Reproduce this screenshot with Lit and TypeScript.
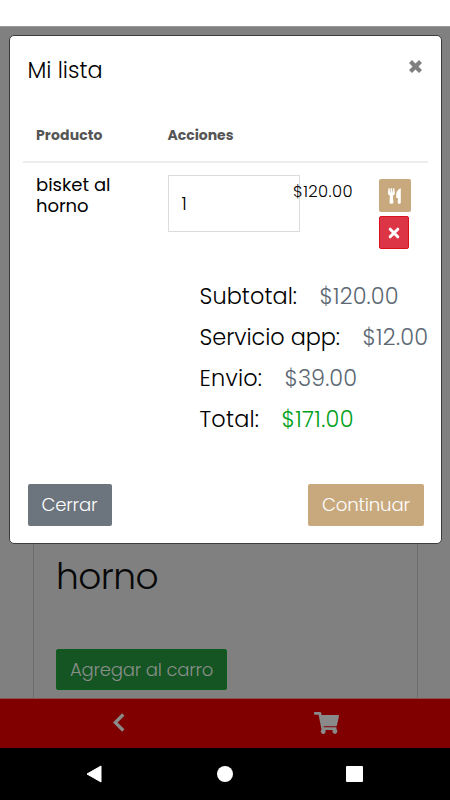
import { LitElement, html, css, svg } from "lit";
import { customElement, property } from "lit/decorators.js";

/** One line of text whose tracking is adjusted so that it fills `width` pixels. */
@customElement("fit-text")
class FitText extends LitElement {
  @property({ type: Number }) width = 0;
  @property() text = "";

  static styles = css`
    :host { display: block; white-space: pre; flex: none; }
    .run { display: inline-block; }
  `;

  render() {
    return html`<span class="run">${this.text}</span>`;
  }

  updated() {
    const run = this.renderRoot.querySelector(".run") as HTMLElement;
    run.style.letterSpacing = "0px";
    const natural = run.getBoundingClientRect().width;
    const gaps = Math.max(1, this.text.length - 1);
    this.style.width = `${this.width}px`;
    run.style.letterSpacing = this.text.length > 1 ? `${(this.width - natural) / gaps}px` : "0px";
  }
}

const cross = svg`<path d="M3 0 L6.5 3.5 L10 0 L13 3 L9.5 6.5 L13 10 L10 13 L6.5 9.5 L3 13 L0 10 L3.5 6.5 L0 3 Z"/>`;

@customElement("app-root")
class AppRoot extends LitElement {
  static styles = css`
    :host {
      display: block;
      position: relative;
      width: 450px;
      height: 800px;
      overflow: hidden;
      background: #fff;
      color: #000;
      font-family: Poppins, Inter, "Open Sans", sans-serif;
      font-weight: 300;
    }
    * { box-sizing: border-box; }
    svg { display: block; }
    .screen { height: 800px; display: flex; flex-direction: column; }
    .status { height: 26px; flex: none; background: #fff; }
    .page {
      flex: 1;
      background: #808080;
      border-top: 1px solid #999;
      padding: 100px 32px 0 33px;
      display: flex;
    }
    .product {
      flex: 1;
      border: solid #6d6d6d;
      border-width: 0 1px;
      padding: 426px 0 0 22px;
    }
    .name { font-size: 36px; line-height: 48px; color: #080808; }
    .add {
      width: 171px;
      height: 41px;
      margin-top: 48px;
      padding-left: 13px;
      border: 1px solid #0b5f1b;
      border-radius: 2px;
      background: #145523;
      color: #8a8f8a;
      font-size: 18.1px;
      line-height: 40px;
    }
    .tabs {
      height: 50px;
      flex: none;
      background: #800000;
      border-top: 1px solid #8c5050;
      display: flex;
      align-items: flex-start;
    }
    .back { margin: 14px 0 0 113px; }
    .cart { margin: 13px 0 0 189px; }
    .system {
      height: 52px;
      flex: none;
      background: #000;
      display: flex;
      padding-left: 86px;
    }
    .sys-back { margin-top: 17px; }
    .sys-home { margin: 18px 0 0 115px; width: 16px; height: 16px; border-radius: 50%; background: #fff; }
    .sys-recent { margin: 18px 0 0 113px; width: 17px; height: 16px; border-radius: 1px; background: #fff; }

    .modal {
      position: absolute;
      left: 9px;
      top: 35px;
      width: 433px;
      height: 509px;
      background: #fff;
      border: 1px solid #3c3c3c;
      border-radius: 5px;
      display: flex;
      flex-direction: column;
    }
    .head { height: 66px; display: flex; padding: 17px 19px 0 17.5px; justify-content: space-between; }
    .title { font-size: 22.4px; line-height: 34px; }
    .close { margin-top: 7px; fill: #808080; }
    .columns {
      height: 61px;
      margin: 0 13px;
      padding: 21px 0 0 13px;
      border-bottom: 2px solid #ededed;
      display: grid;
      grid-template-columns: 131.5px 1fr;
      font-size: 14px;
      line-height: 25px;
      font-weight: 700;
      color: #555;
    }
    .item { height: 113px; display: flex; padding-left: 26px; }
    .item-name { width: 132px; padding-top: 11px; font-size: 18px; line-height: 21px; font-weight: 400; flex: none; }
    .qty {
      width: 132px;
      height: 57px;
      margin-top: 12px;
      padding-left: 12.5px;
      border: 1px solid #dcdcdc;
      font-size: 18px;
      line-height: 55px;
      font-weight: 300;
      flex: none;
    }
    .price { margin: 17px 0 0 -7px; font-size: 16.4px; line-height: 24px; }
    .actions { margin: 16px 0 0 26.5px; display: flex; flex-direction: column; gap: 4px; }
    .mini { display: flex; align-items: center; justify-content: center; height: 33px; border-radius: 2px; fill: #fff; }
    .mini.food { width: 32px; background: #c8a97e; }
    .mini.remove { width: 30px; background: #dc3545; border: 1px solid #dd1020; }
    .totals { height: 208px; padding-left: 189.5px; }
    .total { display: flex; gap: 22.5px; height: 41.1px; font-size: 22.4px; line-height: 41px; }
    .amount { color: #5c6873; }
    .amount.sum { color: #00a01a; }
    .foot { display: flex; justify-content: space-between; padding: 0 17.5px; }
    .button { height: 42px; padding-left: 14px; border-radius: 2px; font-size: 18.1px; line-height: 42px; color: #fff; }
    .dismiss { width: 84.5px; background: #6c757d; }
    .next { width: 115.5px; background: #c8a97e; }
  `;

  private rows = [
    { label: "Subtotal:", labelWidth: 97.5, amount: "$120.00", amountWidth: 79, kind: "" },
    { label: "Servicio app:", labelWidth: 140.5, amount: "$12.00", amountWidth: 65.5, kind: "" },
    { label: "Envio:", labelWidth: 62.5, amount: "$39.00", amountWidth: 72.5, kind: "" },
    { label: "Total:", labelWidth: 59.5, amount: "$171.00", amountWidth: 72, kind: "sum" },
  ];

  render() {
    return html`
      <div class="screen">
        <div class="status"></div>
        <div class="page">
          <div class="product">
            <fit-text class="name" width="102.5" text="horno"></fit-text>
            <div class="add"><fit-text width="143.5" text="Agregar al carro"></fit-text></div>
          </div>
        </div>
        <div class="tabs">
          <svg class="back" width="12" height="20" viewBox="0 0 12 20">
            <path d="M10.3 1.5 L2.2 9.5 L10.3 17.5" fill="none" stroke="#8a8a8a" stroke-width="3.2" />
          </svg>
          <svg class="cart" width="26" height="23" viewBox="0 0 26 23" fill="#8a8a8a">
            <path d="M0.8 0H6Q7 0 7.2 1L7.6 3H24.2Q25.2 3 25 4L23 13.3Q22.8 14.2 21.8 14.2H9.6L9.9 15.3H21.9Q22.8 15.3 22.6 16.2L22.4 17.3A2.5 2.5 0 1 1 18.7 18H11.3A2.5 2.5 0 1 1 7.5 17.6L4.6 2.8H0.8Q0 2.8 0 2V0.8Q0 0 0.8 0Z" />
          </svg>
        </div>
        <div class="system">
          <svg class="sys-back" width="16" height="18" viewBox="0 0 16 18">
            <path d="M15 1 V17 L1 9 Z" fill="#fff" stroke="#fff" stroke-width="1" stroke-linejoin="round" />
          </svg>
          <div class="sys-home"></div>
          <div class="sys-recent"></div>
        </div>
      </div>

      <div class="modal">
        <div class="head">
          <fit-text class="title" width="75" text="Mi lista"></fit-text>
          <svg class="close" width="13" height="13" viewBox="0 0 13 13">${cross}</svg>
        </div>
        <div class="columns">
          <fit-text width="66.5" text="Producto"></fit-text>
          <fit-text width="66" text="Acciones"></fit-text>
        </div>
        <div class="item">
          <div class="item-name">
            <fit-text width="74.5" text="bisket al"></fit-text>
            <fit-text width="52.5" text="horno"></fit-text>
          </div>
          <div class="qty">1</div>
          <fit-text class="price" width="59.5" text="$120.00"></fit-text>
          <div class="actions">
            <div class="mini food">
              <svg width="14" height="16" viewBox="0 0 14 16">
                <path d="M0.4 0.3H1.7L2 4.6H2.4L2.7 0.3H4L4.3 4.6H4.7L5 0.3H6.3L6.8 5Q6.8 7 4.9 7.8L5.4 14.5Q5.4 15.7 3.4 15.7Q1.4 15.7 1.5 14.5L1.9 7.8Q0 7 0 5Z" />
                <path d="M12.8 0.3V14.5Q12.8 15.7 11.2 15.7Q9.6 15.7 9.7 14.5L10 10H8.2Q7.5 2 12.8 0.3Z" />
              </svg>
            </div>
            <div class="mini remove">
              <svg width="12" height="12" viewBox="0 0 12 12">
                <path d="M2.2 2.2 L9.8 9.8 M9.8 2.2 L2.2 9.8" stroke="#fff" stroke-width="3" stroke-linecap="round" />
              </svg>
            </div>
          </div>
        </div>
        <div class="totals">
          ${this.rows.map(
            (r) => html`<div class="total">
              <fit-text width=${r.labelWidth} text=${r.label}></fit-text>
              <fit-text class="amount ${r.kind}" width=${r.amountWidth} text=${r.amount}></fit-text>
            </div>`
          )}
        </div>
        <div class="foot">
          <div class="button dismiss"><fit-text width="56" text="Cerrar"></fit-text></div>
          <div class="button next"><fit-text width="88" text="Continuar"></fit-text></div>
        </div>
      </div>
    `;
  }
}
